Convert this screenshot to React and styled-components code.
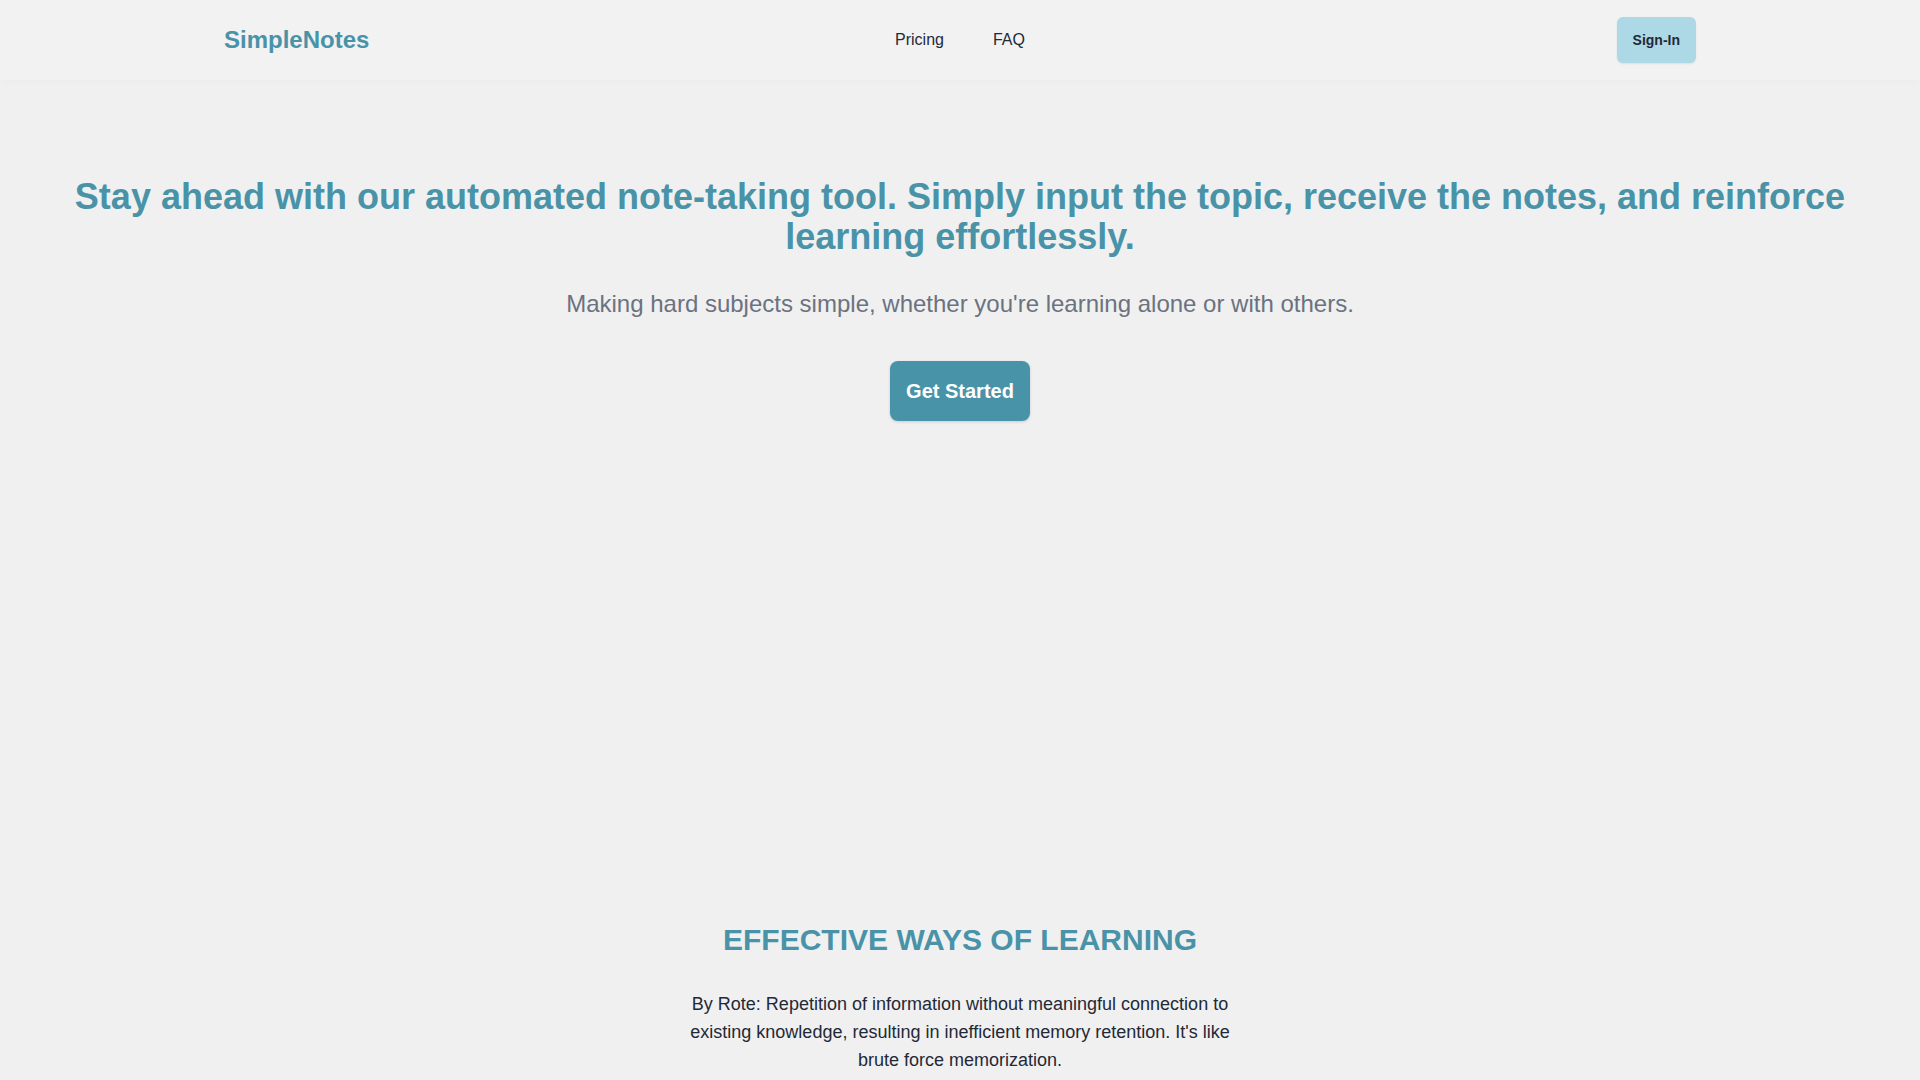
import React from 'react';
import styled, { createGlobalStyle } from 'styled-components';

const teal = '#4993a9';

const GlobalStyle = createGlobalStyle`
  * { box-sizing: border-box; }
  html, body {
    margin: 0;
    padding: 0;
    background: #f0f0f0;
    font-family: "Liberation Sans", Arial, sans-serif;
    color: #1f2937;
  }
  html { scrollbar-width: none; }
`;

const Header = styled.header`
  height: 80px;
  background: #f2f2f2;
  box-shadow: 0 2px 6px rgba(0, 0, 0, 0.02);
`;

const HeaderInner = styled.div`
  height: 100%;
  margin: 0 224px;
  display: grid;
  grid-template-columns: 1fr auto 1fr;
  align-items: center;
`;

const Logo = styled.a`
  justify-self: start;
  font-size: 24px;
  font-weight: 700;
  color: ${teal};
  text-decoration: none;
`;

const Nav = styled.nav`
  display: flex;
  gap: 49px;
`;

const NavLink = styled.a`
  font-size: 16px;
  color: #1f2937;
  text-decoration: none;
`;

const SignIn = styled.button`
  justify-self: end;
  font-family: inherit;
  font-size: 14px;
  font-weight: 700;
  line-height: 20px;
  color: #1f2937;
  background: #add8e6;
  border: none;
  border-radius: 6px;
  padding: 13px 16px;
  box-shadow: 0 1px 2px rgba(0, 0, 0, 0.08);
`;

const Hero = styled.section`
  min-height: 842px;
  padding: 97px 64px 0;
  display: flex;
  flex-direction: column;
  align-items: center;
  text-align: center;
`;

const Title = styled.h1`
  margin: 0 0 31px;
  font-size: 36px;
  line-height: 40px;
  font-weight: 700;
  color: ${teal};
`;

const Subtitle = styled.p`
  margin: 0 0 41px;
  font-size: 24px;
  line-height: 32px;
  color: #6b7280;
`;

const CtaButton = styled.button`
  font-family: inherit;
  font-size: 20px;
  line-height: 28px;
  font-weight: 700;
  color: #fff;
  background: ${teal};
  border: none;
  border-radius: 8px;
  padding: 16px;
  width: 140px;
  box-shadow: 0 1px 3px rgba(0, 0, 0, 0.15);
`;

const Features = styled.section`
  display: flex;
  flex-direction: column;
  align-items: center;
  text-align: center;
  padding: 0 24px 64px;
`;

const SectionTitle = styled.h2`
  margin: 0 0 32px;
  font-size: 30px;
  line-height: 36px;
  font-weight: 700;
  color: ${teal};
  text-transform: uppercase;
`;

const Method = styled.p`
  max-width: 576px;
  margin: 0 0 24px;
  font-size: 18px;
  line-height: 28px;
  color: #1f2937;
`;

const methods = [
  "By Rote: Repetition of information without meaningful connection to existing knowledge, resulting in inefficient memory retention. It's like brute force memorization.",
  "By Understanding: Connecting new ideas to what you already know, so the knowledge sticks and can be applied in new situations.",
  "By Recall: Actively retrieving information from memory at spaced intervals to strengthen long-term retention.",
];

export default function App() {
  return (
    <>
      <GlobalStyle />
      <Header>
        <HeaderInner>
          <Logo href="#">SimpleNotes</Logo>
          <Nav>
            <NavLink href="#">Pricing</NavLink>
            <NavLink href="#">FAQ</NavLink>
          </Nav>
          <SignIn>Sign-In</SignIn>
        </HeaderInner>
      </Header>
      <Hero>
        <Title>
          Stay ahead with our automated note-taking tool. Simply input the topic, receive the notes, and reinforce learning effortlessly.
        </Title>
        <Subtitle>Making hard subjects simple, whether you're learning alone or with others.</Subtitle>
        <CtaButton>Get Started</CtaButton>
      </Hero>
      <Features>
        <SectionTitle>Effective Ways of Learning</SectionTitle>
        {methods.map((m) => (
          <Method key={m}>{m}</Method>
        ))}
      </Features>
    </>
  );
}
